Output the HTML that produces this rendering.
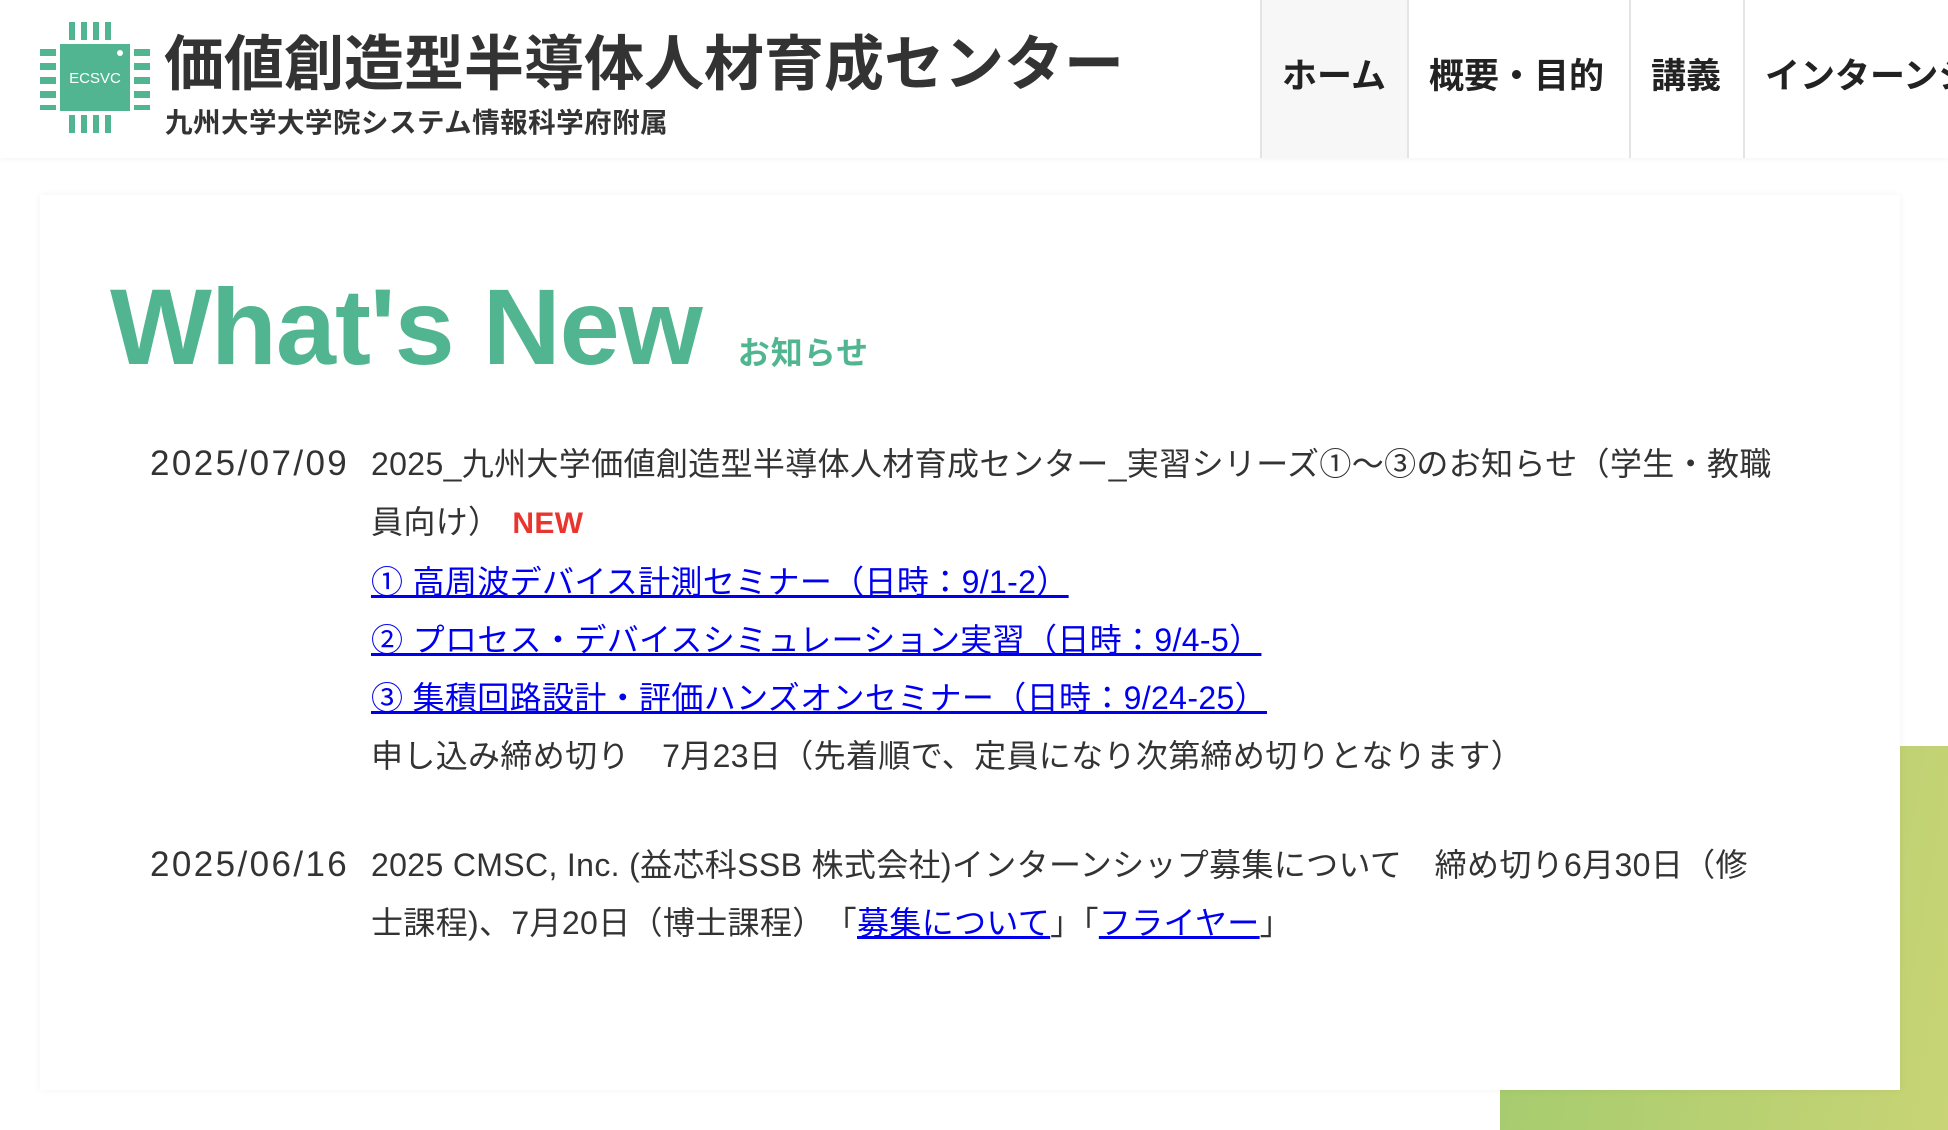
<!DOCTYPE html>
<html><head><meta charset="utf-8">
<style>
*{margin:0;padding:0;box-sizing:border-box}
html,body{width:1948px;height:1130px;overflow:hidden;background:#fff;font-family:"Liberation Sans","Noto Sans CJK JP",sans-serif;color:#333}
.header{position:absolute;left:0;top:0;width:1948px;height:158px;background:#fff;box-shadow:0 2px 5px rgba(0,0,0,0.04)}
.logo{position:absolute;left:40px;top:22px;width:110px;height:111px}
.title{position:absolute;left:164px;top:20px;font-size:60px;font-weight:bold;color:#333;line-height:80px;white-space:nowrap;font-family:"Noto Sans CJK JP",sans-serif}
.sub{position:absolute;left:165px;top:102px;font-size:27.5px;font-weight:bold;color:#333;line-height:36px;white-space:nowrap;font-family:"Noto Sans CJK JP",sans-serif;letter-spacing:0.5px}
.nav{position:absolute;left:1260px;top:0;height:158px;width:688px;overflow:hidden;white-space:nowrap}
.nav div{position:absolute;top:0;height:158px;border-left:2px solid #e4e4e4;font-size:35px;font-weight:bold;color:#222;line-height:148px;padding-left:20px;font-family:"Noto Sans CJK JP",sans-serif}
.green{position:absolute;left:1500px;top:746px;width:448px;height:384px;background:linear-gradient(100deg,#a2cb6e,#c8d475)}
.card{position:absolute;left:40px;top:195px;width:1860px;height:895px;background:#fff;box-shadow:0 0 8px rgba(0,0,0,0.05)}
.wn{position:absolute;left:110px;top:262px;font-size:108px;font-weight:bold;color:#52b591;line-height:130px;white-space:nowrap;font-family:"Liberation Sans",sans-serif;letter-spacing:-1px}
.wn span{font-size:32px;margin-left:36px;font-family:"Noto Sans CJK JP",sans-serif;letter-spacing:1px}
.item{position:absolute;left:150px;font-size:32px;line-height:58px;width:1620px}
.date{position:absolute;left:0;top:0;font-family:"Liberation Sans",sans-serif;font-size:35px;letter-spacing:2.4px}
.txt{position:absolute;left:221px;top:0;width:1500px;letter-spacing:0.35px;white-space:nowrap}
a{color:#0000ee;text-decoration:underline}
.new{color:#e8352e;font-weight:bold;margin-left:12px;font-family:"Liberation Sans",sans-serif;font-size:30px}
</style></head><body>
<div class="header">
<svg class="logo" viewBox="0 0 110 111">
<g fill="#52b591">
<rect x="20" y="22" width="70" height="67"/>
<rect x="29" y="0" width="6" height="18"/><rect x="41" y="0" width="6" height="18"/><rect x="53" y="0" width="6" height="18"/><rect x="65" y="0" width="6" height="18"/>
<rect x="29" y="93" width="6" height="18"/><rect x="41" y="93" width="6" height="18"/><rect x="53" y="93" width="6" height="18"/><rect x="65" y="93" width="6" height="18"/>
<rect x="0" y="27" width="16" height="7"/><rect x="0" y="41" width="16" height="7"/><rect x="0" y="55" width="16" height="7"/><rect x="0" y="69" width="16" height="7"/><rect x="0" y="83" width="16" height="5"/>
<rect x="94" y="27" width="16" height="7"/><rect x="94" y="41" width="16" height="7"/><rect x="94" y="55" width="16" height="7"/><rect x="94" y="69" width="16" height="7"/><rect x="94" y="83" width="16" height="5"/>
</g>
<circle cx="80" cy="31" r="3" fill="#fff"/>
<text x="55" y="61" fill="#fff" font-size="15" text-anchor="middle" font-family="Liberation Sans,sans-serif">ECSVC</text>
</svg>
<div class="title">価値創造型半導体人材育成センター</div>
<div class="sub">九州大学大学院システム情報科学府附属</div>
<div class="nav">
<div style="left:0;width:147px;background:#f7f7f7">ホーム</div>
<div style="left:147px;width:222px">概要・目的</div>
<div style="left:369px;width:114px">講義</div>
<div style="left:483px;width:300px">インターンシップ</div>
</div>
</div>
<div class="green"></div>
<div class="card"></div>
<div class="wn">What's New<span>お知らせ</span></div>
<div class="item" style="top:435px">
<div class="date">2025/07/09</div>
<div class="txt">2025_九州大学価値創造型半導体人材育成センター_実習シリーズ①〜③のお知らせ（学生・教職<br>員向け）<span class="new">NEW</span><br>
<a>① 高周波デバイス計測セミナー（日時：9/1-2）</a><br>
<a>② プロセス・デバイスシミュレーション実習（日時：9/4-5）</a><br>
<a>③ 集積回路設計・評価ハンズオンセミナー（日時：9/24-25）</a><br>
申し込み締め切り　7月23日（先着順で、定員になり次第締め切りとなります）</div>
</div>
<div class="item" style="top:836px">
<div class="date">2025/06/16</div>
<div class="txt">2025 CMSC, Inc. (益芯科SSB 株式会社)インターンシップ募集について　締め切り6月30日（修<br>士課程)、7月20日（博士課程）<span style="margin-left:16px">「</span><a>募集について</a>」「<a>フライヤー</a>」</div>
</div>
</body></html>
